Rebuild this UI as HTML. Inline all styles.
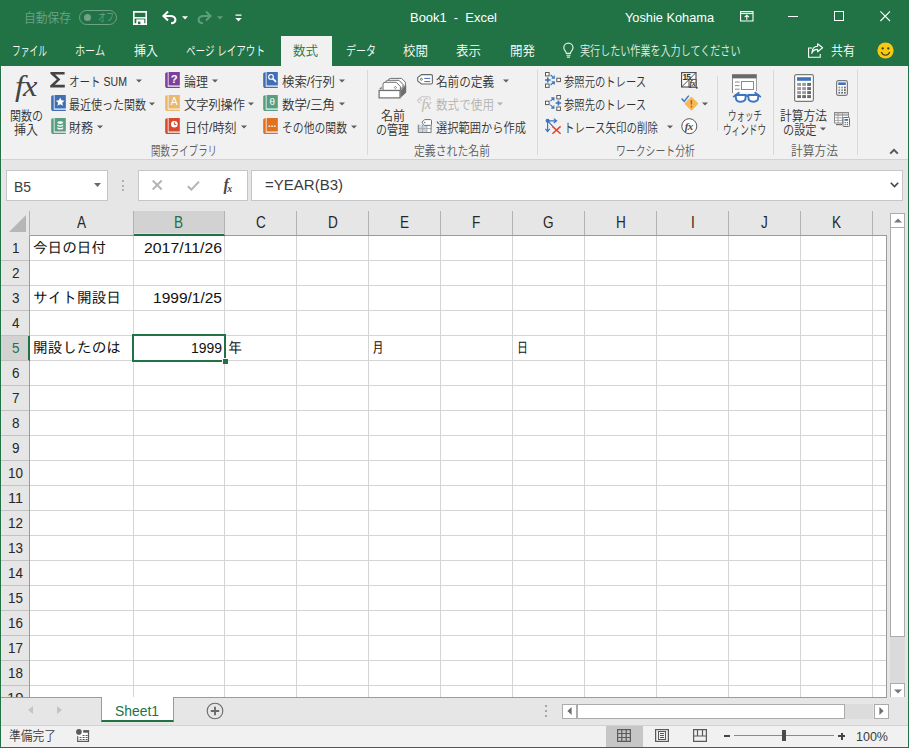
<!DOCTYPE html><html lang="ja"><head><meta charset="utf-8"><title>Book1 - Excel</title><style>
html,body{margin:0;padding:0;background:#e6e6e6;}
#w{position:relative;width:909px;height:748px;overflow:hidden;background:#e6e6e6;}
#w *{box-sizing:border-box;}
.a{position:absolute;}
.t{position:absolute;white-space:pre;transform-origin:0 50%;display:block;}
.u{font-family:"Liberation Sans","Noto Sans CJK JP",sans-serif;font-weight:350;}
.c{font-family:"Liberation Sans","IPAGothic","Noto Sans CJK JP",sans-serif;}
svg{position:absolute;overflow:visible;}

</style></head><body><div id="w">
<div class="a" style="left:0px;top:0px;width:909px;height:66px;background:#217346;"></div>
<div class="a" style="left:281px;top:36px;width:51px;height:30px;background:#f1f1f1;"></div>
<div class="a" style="left:0px;top:66px;width:909px;height:94px;background:#f1f1f1;border-bottom:1px solid #d2d2d2;"></div>
<div class="a" style="left:0px;top:66px;width:1px;height:682px;background:#217346;"></div>
<div class="a" style="left:1px;top:66px;width:1px;height:93px;background:#fbfbfb;"></div>
<div class="a" style="left:908px;top:66px;width:1px;height:682px;background:#217346;"></div>
<div class="a" style="left:0px;top:747px;width:909px;height:1px;background:#217346;"></div>
<div class="a" style="left:79px;top:10px;width:38px;height:15px;border:1px solid #6fa386;border-radius:8px;"></div>
<div class="a" style="left:84px;top:14px;width:7px;height:7px;background:#6fa386;border-radius:50%;"></div>
<svg style="left:136px;top:79px" width="6" height="4" viewBox="0 0 6 4"><path d="M0 0.5h6L3 3.5z" fill="#5e5e5e"/></svg>
<svg style="left:149px;top:102px" width="6" height="4" viewBox="0 0 6 4"><path d="M0 0.5h6L3 3.5z" fill="#5e5e5e"/></svg>
<svg style="left:97px;top:125px" width="6" height="4" viewBox="0 0 6 4"><path d="M0 0.5h6L3 3.5z" fill="#5e5e5e"/></svg>
<svg style="left:212px;top:79px" width="6" height="4" viewBox="0 0 6 4"><path d="M0 0.5h6L3 3.5z" fill="#5e5e5e"/></svg>
<svg style="left:248px;top:102px" width="6" height="4" viewBox="0 0 6 4"><path d="M0 0.5h6L3 3.5z" fill="#5e5e5e"/></svg>
<svg style="left:240.5px;top:125px" width="6" height="4" viewBox="0 0 6 4"><path d="M0 0.5h6L3 3.5z" fill="#5e5e5e"/></svg>
<svg style="left:339px;top:79px" width="6" height="4" viewBox="0 0 6 4"><path d="M0 0.5h6L3 3.5z" fill="#5e5e5e"/></svg>
<svg style="left:339px;top:102px" width="6" height="4" viewBox="0 0 6 4"><path d="M0 0.5h6L3 3.5z" fill="#5e5e5e"/></svg>
<svg style="left:351px;top:125px" width="6" height="4" viewBox="0 0 6 4"><path d="M0 0.5h6L3 3.5z" fill="#5e5e5e"/></svg>
<svg style="left:503px;top:79px" width="6" height="4" viewBox="0 0 6 4"><path d="M0 0.5h6L3 3.5z" fill="#5e5e5e"/></svg>
<svg style="left:667px;top:125px" width="6" height="4" viewBox="0 0 6 4"><path d="M0 0.5h6L3 3.5z" fill="#5e5e5e"/></svg>
<svg style="left:702px;top:102px" width="6" height="4" viewBox="0 0 6 4"><path d="M0 0.5h6L3 3.5z" fill="#5e5e5e"/></svg>
<svg style="left:820px;top:127px" width="6" height="4" viewBox="0 0 6 4"><path d="M0 0.5h6L3 3.5z" fill="#5e5e5e"/></svg>
<svg style="left:497px;top:102px" width="6" height="4" viewBox="0 0 6 4"><path d="M0 0.5h6L3 3.5z" fill="#b1b1b1"/></svg>
<div class="a" style="left:367px;top:70px;width:1px;height:85px;background:#d8d8d8;"></div>
<div class="a" style="left:537px;top:70px;width:1px;height:85px;background:#d8d8d8;"></div>
<div class="a" style="left:717px;top:76px;width:1px;height:55px;background:#d8d8d8;"></div>
<div class="a" style="left:773px;top:70px;width:1px;height:85px;background:#d8d8d8;"></div>
<div class="a" style="left:857px;top:70px;width:1px;height:85px;background:#d8d8d8;"></div>
<div class="a" style="left:6px;top:170px;width:102px;height:31px;background:#ffffff;border:1px solid #c6c6c6;"></div>
<svg style="left:94px;top:183px" width="7" height="4" viewBox="0 0 7 4"><path d="M0 0h7L3.500 4z" fill="#6a6a6a"/></svg>
<div class="a" style="left:122px;top:180px;width:2px;height:2px;background:#b0b0b0;"></div>
<div class="a" style="left:122px;top:184.5px;width:2px;height:2px;background:#b0b0b0;"></div>
<div class="a" style="left:122px;top:189px;width:2px;height:2px;background:#b0b0b0;"></div>
<div class="a" style="left:138px;top:170px;width:110px;height:31px;background:#ffffff;border:1px solid #c6c6c6;"></div>
<div class="a" style="left:251px;top:170px;width:652px;height:31px;background:#ffffff;border:1px solid #c6c6c6;"></div>
<div class="a" style="left:30px;top:236px;width:857px;height:461px;background:#ffffff;"></div>
<div class="a" style="left:134px;top:211px;width:90px;height:23px;background:#d2d2d2;"></div>
<div class="a" style="left:134px;top:233px;width:90px;height:1px;background:#e4dede;"></div>
<div class="a" style="left:1px;top:336px;width:28px;height:24px;background:#d2d2d2;"></div>
<div class="a" style="left:30px;top:235px;width:857px;height:1px;background:#9b9b9b;"></div>
<div class="a" style="left:134px;top:234px;width:91px;height:2px;background:#217346;"></div>
<div class="a" style="left:29px;top:236px;width:1px;height:461px;background:#9b9b9b;"></div>
<div class="a" style="left:28px;top:336px;width:2px;height:25px;background:#217346;"></div>
<div class="a" style="left:133px;top:211px;width:1px;height:24px;background:#b2b2b2;"></div>
<div class="a" style="left:133px;top:236px;width:1px;height:461px;background:#d4d4d4;"></div>
<div class="a" style="left:224px;top:211px;width:1px;height:24px;background:#b2b2b2;"></div>
<div class="a" style="left:224px;top:236px;width:1px;height:461px;background:#d4d4d4;"></div>
<div class="a" style="left:296px;top:211px;width:1px;height:24px;background:#b2b2b2;"></div>
<div class="a" style="left:296px;top:236px;width:1px;height:461px;background:#d4d4d4;"></div>
<div class="a" style="left:368px;top:211px;width:1px;height:24px;background:#b2b2b2;"></div>
<div class="a" style="left:368px;top:236px;width:1px;height:461px;background:#d4d4d4;"></div>
<div class="a" style="left:440px;top:211px;width:1px;height:24px;background:#b2b2b2;"></div>
<div class="a" style="left:440px;top:236px;width:1px;height:461px;background:#d4d4d4;"></div>
<div class="a" style="left:512px;top:211px;width:1px;height:24px;background:#b2b2b2;"></div>
<div class="a" style="left:512px;top:236px;width:1px;height:461px;background:#d4d4d4;"></div>
<div class="a" style="left:584px;top:211px;width:1px;height:24px;background:#b2b2b2;"></div>
<div class="a" style="left:584px;top:236px;width:1px;height:461px;background:#d4d4d4;"></div>
<div class="a" style="left:656px;top:211px;width:1px;height:24px;background:#b2b2b2;"></div>
<div class="a" style="left:656px;top:236px;width:1px;height:461px;background:#d4d4d4;"></div>
<div class="a" style="left:728px;top:211px;width:1px;height:24px;background:#b2b2b2;"></div>
<div class="a" style="left:728px;top:236px;width:1px;height:461px;background:#d4d4d4;"></div>
<div class="a" style="left:800px;top:211px;width:1px;height:24px;background:#b2b2b2;"></div>
<div class="a" style="left:800px;top:236px;width:1px;height:461px;background:#d4d4d4;"></div>
<div class="a" style="left:872px;top:211px;width:1px;height:24px;background:#b2b2b2;"></div>
<div class="a" style="left:872px;top:236px;width:1px;height:461px;background:#d4d4d4;"></div>
<div class="a" style="left:29px;top:211px;width:1px;height:25px;background:#b2b2b2;"></div>
<div class="a" style="left:30px;top:260px;width:857px;height:1px;background:#d4d4d4;"></div>
<div class="a" style="left:1px;top:260px;width:28px;height:1px;background:#c2c2c2;"></div>
<div class="a" style="left:30px;top:285px;width:857px;height:1px;background:#d4d4d4;"></div>
<div class="a" style="left:1px;top:285px;width:28px;height:1px;background:#c2c2c2;"></div>
<div class="a" style="left:30px;top:310px;width:857px;height:1px;background:#d4d4d4;"></div>
<div class="a" style="left:1px;top:310px;width:28px;height:1px;background:#c2c2c2;"></div>
<div class="a" style="left:30px;top:335px;width:857px;height:1px;background:#d4d4d4;"></div>
<div class="a" style="left:1px;top:335px;width:28px;height:1px;background:#c2c2c2;"></div>
<div class="a" style="left:30px;top:360px;width:857px;height:1px;background:#d4d4d4;"></div>
<div class="a" style="left:1px;top:360px;width:28px;height:1px;background:#c2c2c2;"></div>
<div class="a" style="left:30px;top:385px;width:857px;height:1px;background:#d4d4d4;"></div>
<div class="a" style="left:1px;top:385px;width:28px;height:1px;background:#c2c2c2;"></div>
<div class="a" style="left:30px;top:410px;width:857px;height:1px;background:#d4d4d4;"></div>
<div class="a" style="left:1px;top:410px;width:28px;height:1px;background:#c2c2c2;"></div>
<div class="a" style="left:30px;top:435px;width:857px;height:1px;background:#d4d4d4;"></div>
<div class="a" style="left:1px;top:435px;width:28px;height:1px;background:#c2c2c2;"></div>
<div class="a" style="left:30px;top:460px;width:857px;height:1px;background:#d4d4d4;"></div>
<div class="a" style="left:1px;top:460px;width:28px;height:1px;background:#c2c2c2;"></div>
<div class="a" style="left:30px;top:485px;width:857px;height:1px;background:#d4d4d4;"></div>
<div class="a" style="left:1px;top:485px;width:28px;height:1px;background:#c2c2c2;"></div>
<div class="a" style="left:30px;top:510px;width:857px;height:1px;background:#d4d4d4;"></div>
<div class="a" style="left:1px;top:510px;width:28px;height:1px;background:#c2c2c2;"></div>
<div class="a" style="left:30px;top:535px;width:857px;height:1px;background:#d4d4d4;"></div>
<div class="a" style="left:1px;top:535px;width:28px;height:1px;background:#c2c2c2;"></div>
<div class="a" style="left:30px;top:560px;width:857px;height:1px;background:#d4d4d4;"></div>
<div class="a" style="left:1px;top:560px;width:28px;height:1px;background:#c2c2c2;"></div>
<div class="a" style="left:30px;top:585px;width:857px;height:1px;background:#d4d4d4;"></div>
<div class="a" style="left:1px;top:585px;width:28px;height:1px;background:#c2c2c2;"></div>
<div class="a" style="left:30px;top:610px;width:857px;height:1px;background:#d4d4d4;"></div>
<div class="a" style="left:1px;top:610px;width:28px;height:1px;background:#c2c2c2;"></div>
<div class="a" style="left:30px;top:635px;width:857px;height:1px;background:#d4d4d4;"></div>
<div class="a" style="left:1px;top:635px;width:28px;height:1px;background:#c2c2c2;"></div>
<div class="a" style="left:30px;top:660px;width:857px;height:1px;background:#d4d4d4;"></div>
<div class="a" style="left:1px;top:660px;width:28px;height:1px;background:#c2c2c2;"></div>
<div class="a" style="left:30px;top:685px;width:857px;height:1px;background:#d4d4d4;"></div>
<div class="a" style="left:1px;top:685px;width:28px;height:1px;background:#c2c2c2;"></div>
<div class="a" style="left:1px;top:686px;width:28px;height:11px;overflow:hidden;"><span class="c" style="position:absolute;left:6px;top:1px;font-size:15px;line-height:21px;color:#262626;">19</span></div>
<div class="a" style="left:886px;top:236px;width:1px;height:461px;background:#9b9b9b;"></div>
<svg style="left:9px;top:215px" width="17" height="17" viewBox="0 0 17 17"><path d="M17 0V17H0z" fill="#b6b6b6"/></svg>
<div class="a" style="left:132px;top:334px;width:94px;height:28px;border:2px solid #217346;"></div>
<div class="a" style="left:222px;top:358px;width:6px;height:6px;background:#217346;border:1px solid #fff;border-right:0;border-bottom:0;"></div>
<div class="a" style="left:890px;top:213px;width:15px;height:15px;background:#ffffff;border:1px solid #ababab;"></div>
<div class="a" style="left:890px;top:637px;width:15px;height:46px;background:#dadada;"></div>
<div class="a" style="left:890px;top:228px;width:15px;height:409px;background:#ffffff;border:1px solid #ababab;border-top:0;"></div>
<div class="a" style="left:890px;top:683px;width:15px;height:15px;background:#ffffff;border:1px solid #ababab;"></div>
<svg style="left:893.5px;top:218px" width="8" height="5" viewBox="0 0 8 5"><path d="M0 4.6h8L4 0.4z" fill="#777"/></svg>
<svg style="left:893.5px;top:688.5px" width="8" height="5" viewBox="0 0 8 5"><path d="M0 0.4h8L4 4.6z" fill="#777"/></svg>
<div class="a" style="left:1px;top:697px;width:907px;height:28px;background:#e6e6e6;"></div>
<div class="a" style="left:1px;top:697px;width:886px;height:1px;background:#9b9b9b;"></div>
<div class="a" style="left:101px;top:697px;width:73px;height:25px;background:#ffffff;border-bottom:2px solid #217346;border-right:1px solid #9b9b9b;border-left:1px solid #9b9b9b;"></div>
<svg style="left:28px;top:706px" width="5" height="8" viewBox="0 0 5 8"><path d="M5 0v8L0 4z" fill="#c4c4c4"/></svg>
<svg style="left:57px;top:706px" width="5" height="8" viewBox="0 0 5 8"><path d="M0 0v8L5 4z" fill="#c4c4c4"/></svg>
<svg style="left:206px;top:702px" width="18" height="18" viewBox="0 0 18 18"><circle cx="9" cy="9" r="7.8" fill="none" stroke="#6a6a6a" stroke-width="1.1"/><path d="M4.8 9h8.400M9 4.800v8.400" stroke="#6a6a6a" stroke-width="1.900"/></svg>
<div class="a" style="left:545px;top:705px;width:2px;height:2px;background:#a6a6a6;"></div>
<div class="a" style="left:545px;top:710px;width:2px;height:2px;background:#a6a6a6;"></div>
<div class="a" style="left:545px;top:715px;width:2px;height:2px;background:#a6a6a6;"></div>
<div class="a" style="left:845px;top:704px;width:28px;height:15px;background:#dcdcdc;"></div>
<div class="a" style="left:562px;top:704px;width:15px;height:15px;background:#ffffff;border:1px solid #ababab;"></div>
<div class="a" style="left:577px;top:704px;width:268px;height:15px;background:#ffffff;border:1px solid #ababab;"></div>
<div class="a" style="left:874px;top:704px;width:15px;height:15px;background:#ffffff;border:1px solid #ababab;"></div>
<svg style="left:567px;top:707px" width="5" height="8" viewBox="0 0 5 8"><path d="M4.600 0v8L0.400 4z" fill="#6e6e6e"/></svg>
<svg style="left:879px;top:707px" width="5" height="8" viewBox="0 0 5 8"><path d="M0.400 0v8L4.600 4z" fill="#6e6e6e"/></svg>
<div class="a" style="left:1px;top:725px;width:907px;height:22px;background:#f1f1f1;border-top:1px solid #d2d2d2;"></div>
<div class="a" style="left:606px;top:726px;width:37px;height:21px;background:#c6c6c6;"></div>
<div class="a" style="left:724px;top:735px;width:6px;height:2px;background:#444;"></div>
<div class="a" style="left:734px;top:735px;width:100px;height:1px;background:#8a8a8a;"></div>
<div class="a" style="left:782px;top:730px;width:4px;height:11px;background:#4a4a4a;"></div>
<div class="a" style="left:838px;top:735px;width:7px;height:2px;background:#444;"></div>
<div class="a" style="left:840.5px;top:732.5px;width:2px;height:7px;background:#444;"></div>
<svg style="left:133px;top:11px" width="14" height="14" viewBox="0 0 14 14"><path d="M0.800 0.900h12.400v12.200H0.800z" fill="none" stroke="#ffffff" stroke-width="1.600"/><path d="M1 6.800h12" stroke="#ffffff" stroke-width="1.500"/><rect x="3.300" y="8.400" width="8" height="5.200" fill="#ffffff"/><rect x="5" y="10.600" width="2.400" height="2.600" fill="#217346"/></svg>
<svg style="left:162px;top:11px" width="15" height="13" viewBox="0 0 15 13"><g fill="none" stroke="#ffffff" stroke-width="2.100"><path d="M6 0.600L1.500 5l4.500 4.400"/><path d="M1.800 5h6.600c3 0 5 1.600 5 3.800 0 2.100-1.700 3.400-4.400 3.400"/></g></svg>
<svg style="left:197px;top:11px" width="15" height="13" viewBox="0 0 15 13"><g transform="translate(15,0) scale(-1,1)" fill="none" stroke="#5f9d7c" stroke-width="2.100"><path d="M6 0.600L1.500 5l4.500 4.400"/><path d="M1.800 5h6.600c3 0 5 1.600 5 3.800 0 2.100-1.700 3.400-4.400 3.400"/></g></svg>
<svg style="left:182px;top:16px" width="6" height="4" viewBox="0 0 6 4"><path d="M0 0.3h6L3 3.6z" fill="#ffffff"/></svg>
<svg style="left:217px;top:16px" width="6" height="4" viewBox="0 0 6 4"><path d="M0 0.3h6L3 3.6z" fill="#5f9d7c"/></svg>
<svg style="left:235px;top:13.8px" width="7" height="9" viewBox="0 0 7 9"><path d="M0.5 0.5h6v1.3h-6zM0.3 4h6.4L3.5 7.6z" fill="#ffffff"/></svg>
<svg style="left:740px;top:11px" width="14" height="10.5" viewBox="0 0 14 10.5"><path d="M0.600 0.600h12.400v9.400H0.600z" fill="none" stroke="#ffffff" stroke-width="1.100"/><path d="M0.600 2.600h12.400" stroke="#ffffff" stroke-width="1"/><path d="M6.800 8.800V4.400M4.600 6.200l2.200-2 2.200 2" fill="none" stroke="#ffffff" stroke-width="1.100"/></svg>
<div class="a" style="left:788px;top:16px;width:10px;height:1px;background:#ffffff;"></div>
<div class="a" style="left:834px;top:11px;width:10px;height:10px;border:1px solid #ffffff;"></div>
<svg style="left:880px;top:11px" width="11" height="11" viewBox="0 0 11 11"><path d="M0.400 0.400l9.600 9.600M10 0.400l-9.600 9.600" stroke="#ffffff" stroke-width="1.100"/></svg>
<svg style="left:563px;top:42.5px" width="11" height="15" viewBox="0 0 11 15"><path d="M3.400 10.400c0-1.800-2.600-2.800-2.600-5.600a4.600 4.600 0 0 1 9.200 0c0 2.800-2.600 3.800-2.600 5.600z" fill="none" stroke="#e4efe8" stroke-width="1.200"/><path d="M3.400 12.300h4.200M3.900 14.100h3.200" stroke="#e4efe8" stroke-width="1.100"/></svg>
<svg style="left:808px;top:42.5px" width="16" height="15" viewBox="0 0 16 15"><path d="M4.2 5H0.6v9.2h11.6V11" fill="none" stroke="#ffffff" stroke-width="1.1"/><path d="M9.6 0.8l5 4-5 4V6.4C6.6 6.4 4.8 7.6 3.8 10.4 4 6.4 6 3.4 9.6 3.2z" fill="none" stroke="#ffffff" stroke-width="1.1" stroke-linejoin="round"/></svg>
<svg style="left:876.5px;top:41.5px" width="17" height="17" viewBox="0 0 18 18"><circle cx="9" cy="9" r="8.6" fill="#f7c814"/><circle cx="6" cy="6.8" r="1.2" fill="#3a3a1a"/><circle cx="12" cy="6.8" r="1.2" fill="#3a3a1a"/><path d="M4.4 10.6c1.2 2.4 2.8 3.4 4.6 3.4s3.4-1 4.6-3.4" fill="none" stroke="#3a3a1a" stroke-width="1.2"/></svg>
<span class="a" style="left:15px;top:67.5px;font:italic 30px/36px 'Liberation Serif',serif;color:#444;letter-spacing:-1px;transform:scaleX(1.080);transform-origin:0 0;">fx</span>
<svg style="left:50px;top:71.5px" width="15.5" height="15.5" viewBox="0 0 15.5 15.5"><path d="M0.4 0h14.2v2.6H5.2l5.2 5-5.6 5.2h10V15.4H0.2v-2l6.6-5.8L0.4 1.8z" fill="#444444"/></svg>
<svg style="left:51px;top:94.8px" width="15" height="16.6" viewBox="0 0 15 17"><path d="M2.6 0.2H1.9C0.8 0.2 0 1 0 2v12.4c0 1.2 0.9 2.1 2.1 2.1H15v-1.3H2.6z" fill="#3f6fb7"/><rect x="3.5" y="0" width="11.5" height="13.8" fill="#3f6fb7"/><path d="M9.25 2.6l1.3 2.9 3.1 0.3-2.3 2.1 0.7 3.1-2.8-1.6-2.8 1.6 0.7-3.1-2.3-2.1 3.1-0.3z" fill="#fff"/></svg>
<svg style="left:51px;top:118px" width="15" height="16.6" viewBox="0 0 15 17"><path d="M2.6 0.2H1.9C0.8 0.2 0 1 0 2v12.4c0 1.2 0.9 2.1 2.1 2.1H15v-1.3H2.6z" fill="#5a9e82"/><rect x="3.5" y="0" width="11.5" height="13.8" fill="#5a9e82"/><g fill="#f2f8f5"><ellipse cx="9.300" cy="4.700" rx="3" ry="1.400"/><path d="M6.300 6.300c.6.700 1.700 1 3 1s2.400-.3 3-1v1.600c-.6.700-1.700 1-3 1s-2.400-.3-3-1z"/><path d="M6.300 9.300c.6.700 1.700 1 3 1s2.400-.3 3-1v1.600c-.6.700-1.700 1-3 1s-2.400-.3-3-1z"/></g></svg>
<svg style="left:165px;top:71.6px" width="15" height="16.6" viewBox="0 0 15 17"><path d="M2.6 0.2H1.9C0.8 0.2 0 1 0 2v12.4c0 1.2 0.9 2.1 2.1 2.1H15v-1.3H2.6z" fill="#7d3f9e"/><rect x="3.5" y="0" width="11.5" height="13.8" fill="#7d3f9e"/><text x="9.3" y="11" text-anchor="middle" font-family="Liberation Sans,sans-serif" font-size="11.5" font-weight="700" fill="#fff">?</text></svg>
<svg style="left:165px;top:94.8px" width="15" height="16.6" viewBox="0 0 15 17"><path d="M2.6 0.2H1.9C0.8 0.2 0 1 0 2v12.4c0 1.2 0.9 2.1 2.1 2.1H15v-1.3H2.6z" fill="#e9b86c"/><rect x="3.5" y="0" width="11.5" height="13.8" fill="#e9b86c"/><text x="9.3" y="10.6" text-anchor="middle" font-family="Liberation Sans,sans-serif" font-size="10.5" font-weight="400" fill="#fff">A</text></svg>
<svg style="left:165px;top:118px" width="15" height="16.6" viewBox="0 0 15 17"><path d="M2.6 0.2H1.9C0.8 0.2 0 1 0 2v12.4c0 1.2 0.9 2.1 2.1 2.1H15v-1.3H2.6z" fill="#d5492c"/><rect x="3.5" y="0" width="11.5" height="13.8" fill="#d5492c"/><circle cx="9.4" cy="6.4" r="3.4" fill="#fff"/><path d="M9.4 4.2v2.4h2" fill="none" stroke="#d5492c" stroke-width="1"/></svg>
<svg style="left:263px;top:71.6px" width="15" height="16.6" viewBox="0 0 15 17"><path d="M2.6 0.2H1.9C0.8 0.2 0 1 0 2v12.4c0 1.2 0.9 2.1 2.1 2.1H15v-1.3H2.6z" fill="#3f6fb7"/><rect x="3.5" y="0" width="11.5" height="13.8" fill="#3f6fb7"/><circle cx="8" cy="5" r="2.4" fill="none" stroke="#fff" stroke-width="1.2"/><path d="M9.8 6.8l3.4 3.4" stroke="#fff" stroke-width="1.7"/></svg>
<svg style="left:263px;top:94.8px" width="15" height="16.6" viewBox="0 0 15 17"><path d="M2.6 0.2H1.9C0.8 0.2 0 1 0 2v12.4c0 1.2 0.9 2.1 2.1 2.1H15v-1.3H2.6z" fill="#5a9e82"/><rect x="3.5" y="0" width="11.5" height="13.8" fill="#5a9e82"/><text x="9.3" y="10.6" text-anchor="middle" font-family="Liberation Sans,sans-serif" font-size="10" font-weight="400" fill="#fff">θ</text></svg>
<svg style="left:263px;top:118px" width="15" height="16.6" viewBox="0 0 15 17"><path d="M2.6 0.2H1.9C0.8 0.2 0 1 0 2v12.4c0 1.2 0.9 2.1 2.1 2.1H15v-1.3H2.6z" fill="#e0721f"/><rect x="3.5" y="0" width="11.5" height="13.8" fill="#e0721f"/><text x="9.3" y="9.6" text-anchor="middle" font-family="Liberation Sans,sans-serif" font-size="9" font-weight="700" fill="#fff">…</text></svg>
<svg style="left:378px;top:76px" width="29" height="23" viewBox="0 0 29 23"><g stroke="#6e6e6e" stroke-width="1" fill="#fff">
<path d="M10.500 12V4.300Q10.600 2.400 12.600 2.400H23.600L27.400 6.200V10z"/>
<path d="M7.700 13V6.300Q7.800 4.300 9.800 4.300H21L25 8.400V12z"/>
<path d="M5 14.400V8.200Q5 6.300 7 6.300H18.200L22.400 10.600V14.400z"/>
</g>
<path d="M17.400 10.300l1.200 1.200-1.200 1.200-1.200-1.200z" fill="none" stroke="#6e6e6e" stroke-width="0.900"/>
<path d="M1 13.200l2.600-2.600v2.600z" fill="#6e6e6e"/>
<path d="M22.400 14.400L28.200 9.200V16.600l-5.800 5.300z" fill="#6e6e6e"/>
<rect x="1.100" y="14.500" width="20.900" height="7.400" fill="#fff" stroke="#6e6e6e" stroke-width="1.200"/></svg>
<svg style="left:417px;top:74px" width="16" height="11" viewBox="0 0 16 11"><path d="M4.600 0.600h9.600c.7 0 1.200.5 1.200 1.200v7c0 .7-.5 1.200-1.200 1.200H4.600L0.700 7V3.600z" fill="#fff" stroke="#666" stroke-width="1.100"/><circle cx="4.400" cy="5.300" r="1" fill="none" stroke="#666" stroke-width="0.900"/><path d="M7.300 4.400h5.900M7.300 7.600h5.900" stroke="#3f6fb7" stroke-width="1"/></svg>
<svg style="left:417px;top:96px" width="16" height="16" viewBox="0 0 16 16"><path d="M13 4.200V2c0-.7-.5-1.200-1.200-1.200H4.400L0.900 3.600v1.800L3.400 7.400" fill="none" stroke="#c2c2c2" stroke-width="1"/><circle cx="3.700" cy="3.900" r="0.900" fill="none" stroke="#c2c2c2" stroke-width="0.800"/><text x="4.400" y="13.400" font-family="Liberation Serif,serif" font-style="italic" font-size="15" fill="#b8b8b8" letter-spacing="-0.800">fx</text></svg>
<svg style="left:417px;top:119px" width="16" height="16" viewBox="0 0 16 16"><rect x="1.300" y="5.700" width="12.800" height="7.800" fill="#fff"/>
<rect x="1.300" y="5.700" width="8.600" height="7.800" fill="#c3d8ee"/>
<path d="M5.600 5.700v7.800M9.900 5.700v7.800M1.300 9.600h12.800" stroke="#a8a8a8" stroke-width="0.900"/>
<path d="M1.300 5.700v7.800h12.800V6" fill="none" stroke="#7a7a7a" stroke-width="1"/>
<path d="M7.600 0.600h5.800c.7 0 1.100.4 1.100 1.100v3.600c0 .7-.4 1.100-1.100 1.100H7.600L5.200 4V3z" fill="#fff" stroke="#6e6e6e" stroke-width="1"/><circle cx="7.800" cy="3.500" r="0.700" fill="#6e6e6e"/></svg>
<svg style="left:545px;top:72px" width="16" height="16" viewBox="0 0 16 16"><rect x="0.5" y="0.5" width="3.6" height="3.4" fill="#fff" stroke="#5a5a5a" stroke-width="1"/><rect x="0.5" y="12" width="3.6" height="3.4" fill="#fff" stroke="#5a5a5a" stroke-width="1"/><rect x="11.8" y="6.2" width="3.6" height="3.4" fill="#fff" stroke="#5a5a5a" stroke-width="1"/><path d="M0 8h5.6M2.8 5.4v5.2" stroke="#3b74c0" stroke-width="1.7"/><path d="M5.6 3l3.4 3M9.3 3.6v2.7H6.6M5.6 13l3.4-3M9.3 12.4V9.7H6.6" fill="none" stroke="#3b74c0" stroke-width="1.1"/></svg>
<svg style="left:545px;top:95px" width="16" height="16" viewBox="0 0 16 16"><rect x="0.5" y="6.2" width="3.6" height="3.4" fill="#fff" stroke="#5a5a5a" stroke-width="1"/><rect x="11.8" y="0.5" width="3.6" height="3.4" fill="#fff" stroke="#5a5a5a" stroke-width="1"/><rect x="11.8" y="12" width="3.6" height="3.4" fill="#fff" stroke="#5a5a5a" stroke-width="1"/><path d="M10.6 8h5.6M13.4 5.4v5.2" stroke="#3b74c0" stroke-width="1.7"/><path d="M5.4 6.2l3.2-3M6.2 2.9h2.7v2.7M5.4 9.8l3.2 3M6.2 13.1h2.7v-2.7" fill="none" stroke="#3b74c0" stroke-width="1.1"/></svg>
<svg style="left:545px;top:118px" width="17" height="17" viewBox="0 0 17 17"><circle cx="2.6" cy="2.8" r="2" fill="#3b74c0"/><path d="M2.6 3v10.6M0.4 10.8l2.2 2.8 2.2-2.8M3 2.8h8.4M8.8 0.6l2.8 2.2-2.8 2.2M3 3.2l5 5.4" fill="none" stroke="#3b74c0" stroke-width="1.2"/><path d="M7.4 8.4l8.2 7.4M15.6 8.4l-8.2 7.4" stroke="#e0452a" stroke-width="1.5"/></svg>
<svg style="left:681px;top:71.5px" width="17" height="17" viewBox="0 0 17 17"><rect x="0.600" y="0.600" width="14.400" height="14.400" fill="#fff" stroke="#4a4a4a" stroke-width="1.100"/>
<path d="M15 0.600L0.600 15" stroke="#4a4a4a" stroke-width="1"/>
<text x="1.400" y="7.800" font-family="Liberation Sans,sans-serif" font-size="8.500" font-weight="700" fill="#333" letter-spacing="-0.900">15</text>
<rect x="8" y="7.400" width="7" height="7.600" fill="#fff" stroke="#4a4a4a" stroke-width="1"/>
<text x="8.600" y="13.600" font-family="Liberation Serif,serif" font-style="italic" font-size="8" font-weight="700" fill="#333" letter-spacing="-0.500">fx</text>
<rect x="15" y="15" width="1.600" height="1.600" fill="#444"/></svg>
<svg style="left:681px;top:94px" width="18" height="18" viewBox="0 0 18 18"><path d="M0.6 4.6l2.6 2.8 4.6-5.8" fill="none" stroke="#3b74c0" stroke-width="1.5"/><path d="M10.4 3.6l6 6-6 6-6-6z" fill="#f4bb55" stroke="#f4bb55" stroke-width="1.6" stroke-linejoin="round"/><path d="M10.4 6v4.4M10.4 11.8v1.6" stroke="#dc4a2f" stroke-width="1.5"/></svg>
<svg style="left:681px;top:118px" width="17" height="17" viewBox="0 0 17 17"><circle cx="8.3" cy="8.2" r="7.5" fill="#fff" stroke="#555" stroke-width="1"/><text x="3.8" y="12" font-family="Liberation Serif,serif" font-style="italic" font-size="11" font-weight="700" fill="#4a4a4a" letter-spacing="-0.700">fx</text></svg>
<svg style="left:731px;top:74px" width="31" height="30" viewBox="0 0 31 30"><rect x="1" y="0.2" width="24.8" height="4.4" fill="#6a6a6a"/>
<path d="M1.5 4.6V19M25.3 4.6V17" stroke="#8a8a8a" stroke-width="1"/><rect x="2" y="4.6" width="22.8" height="14" fill="#fff"/>
<path d="M4 8h4.6M4 11.6h4.6M4 15.2h4.6" stroke="#8a8a8a" stroke-width="1"/>
<rect x="10.5" y="7.5" width="12" height="8" fill="#fff" stroke="#8a8a8a" stroke-width="1"/>
<g fill="#fff" stroke="#3b74c0" stroke-width="1.900"><path d="M4.800 21h9.800v2.600c0 2.600-1.800 4.200-4.900 4.200s-4.900-1.600-4.900-4.200z"/><path d="M17.400 21h9.800v2.600c0 2.600-1.800 4.200-4.900 4.200s-4.900-1.600-4.900-4.200z"/></g>
<path d="M14.600 21.800h2.800M5 21.400L2.600 22.600 8.400 18.200M27 21.400l2.400 1.200-5.800-4.400" fill="none" stroke="#3b74c0" stroke-width="1.700" stroke-linejoin="round"/></svg>
<svg style="left:794px;top:74px" width="20" height="28" viewBox="0 0 20 28"><rect x="0.600" y="0.600" width="18.8" height="26.8" rx="1.800" fill="#fff" stroke="#7a7a7a" stroke-width="1.200"/><rect x="3" y="3.2" width="14" height="3.6" fill="#3f74ba"/><rect x="3.2" y="8.9" width="3.8" height="3" fill="#9a9a9a"/><rect x="8.2" y="8.9" width="3.8" height="3" fill="#9a9a9a"/><rect x="13.2" y="8.9" width="3.8" height="3" fill="#6a6a6a"/><rect x="3.2" y="13.1" width="3.8" height="3" fill="#9a9a9a"/><rect x="8.2" y="13.1" width="3.8" height="3" fill="#9a9a9a"/><rect x="13.2" y="13.1" width="3.8" height="3" fill="#6a6a6a"/><rect x="3.2" y="17.1" width="3.8" height="3" fill="#9a9a9a"/><rect x="8.2" y="17.1" width="3.8" height="3" fill="#9a9a9a"/><rect x="13.2" y="17.1" width="3.8" height="3" fill="#6a6a6a"/><rect x="3.2" y="21.1" width="3.8" height="3" fill="#6a6a6a"/><rect x="8.2" y="21.1" width="3.8" height="3" fill="#6a6a6a"/><rect x="13.2" y="21.1" width="3.8" height="3" fill="#6a6a6a"/></svg>
<svg style="left:836px;top:80px" width="12" height="16" viewBox="0 0 12 16"><rect x="0.600" y="0.600" width="10.8" height="14.8" rx="1.800" fill="#fff" stroke="#7a7a7a" stroke-width="1.200"/><rect x="2.2" y="2.4" width="7.6" height="2.6" fill="#3f74ba"/><rect x="2.4" y="6.6" width="1.8" height="1.8" fill="#9a9a9a"/><rect x="5.2" y="6.6" width="1.8" height="1.8" fill="#9a9a9a"/><rect x="8" y="6.6" width="1.8" height="1.8" fill="#6a6a6a"/><rect x="2.4" y="9.2" width="1.8" height="1.8" fill="#9a9a9a"/><rect x="5.2" y="9.2" width="1.8" height="1.8" fill="#9a9a9a"/><rect x="8" y="9.2" width="1.8" height="1.8" fill="#6a6a6a"/><rect x="2.4" y="11.8" width="1.8" height="1.8" fill="#6a6a6a"/><rect x="5.2" y="11.8" width="1.8" height="1.8" fill="#6a6a6a"/><rect x="8" y="11.8" width="1.8" height="1.8" fill="#6a6a6a"/></svg>
<svg style="left:834px;top:112px" width="16" height="15" viewBox="0 0 16 15"><rect x="0.5" y="0.5" width="14" height="10.5" fill="#fff" stroke="#8a8a8a" stroke-width="1"/><rect x="0.5" y="0.5" width="14" height="2.6" fill="#d0d0d0" stroke="#8a8a8a" stroke-width="1"/>
<path d="M4 0.5V11M8.500 0.500V11M0.500 5.800h14M0.500 8.400h14" stroke="#9a9a9a" stroke-width="0.9"/><path d="M2 12.600h6" stroke="#6e6e6e" stroke-width="1.2"/>
<rect x="9" y="5.500" width="6.500" height="9" rx="0.800" fill="#fff" stroke="#6e6e6e" stroke-width="1"/><rect x="10.400" y="7" width="3.800" height="1.800" fill="#3f74ba"/>
<path d="M10.600 10.600h1.200M12.800 10.600h1.200M10.600 12.600h1.200M12.800 12.600h1.200" stroke="#6e6e6e" stroke-width="1.100"/></svg>
<svg style="left:888.5px;top:147.5px" width="10" height="7" viewBox="0 0 10 7"><path d="M1.200 5.600l3.800-3.800 3.800 3.800" fill="none" stroke="#555" stroke-width="2"/></svg>
<svg style="left:152px;top:180px" width="10.5" height="10" viewBox="0 0 10.5 10"><path d="M0.700 0.500l9 9M9.700 0.500l-9 9" stroke="#b4b4b4" stroke-width="1.900"/></svg>
<svg style="left:187px;top:180.5px" width="13" height="10" viewBox="0 0 13 10"><path d="M0.800 5.200l3.600 3.400 7.600-8" fill="none" stroke="#b4b4b4" stroke-width="2.100"/></svg>
<span class="a" style="left:223.500px;top:175px;font:italic bold 16px/20px 'Liberation Serif',serif;color:#4a4a4a;">f<span style="font-size:10px;position:relative;left:-1.500px;top:1.500px;">x</span></span>
<svg style="left:890px;top:182px" width="9" height="6" viewBox="0 0 9 6"><path d="M0.800 0.800l3.700 3.700 3.700-3.700" fill="none" stroke="#444" stroke-width="1.600"/></svg>
<svg style="left:76px;top:729px" width="14" height="14" viewBox="0 0 14 14"><path d="M2 3h10.500v9.400H2z" fill="#fff"/><circle cx="2.900" cy="2.900" r="2.800" fill="#5a5a5a"/><path d="M1.700 7.200v5.100h10.800V1.600" fill="none" stroke="#5a5a5a" stroke-width="1.200"/><rect x="7.200" y="1.100" width="5.900" height="2.600" fill="#5a5a5a"/><path d="M6.600 6.500h2M9.600 6.500h2M3.600 8.500h2M6.600 8.500h2M9.600 8.500h2M3.600 10.500h2M6.600 10.500h2M9.600 10.500h2" stroke="#5a5a5a" stroke-width="1"/></svg>
<svg style="left:617px;top:729px" width="14" height="13" viewBox="0 0 14 13"><path d="M0.600 0.600h12.800v11.800h-12.800zM0.600 4.500h12.800M0.600 8.500h12.800M4.800 0.600v11.800M9.200 0.600v11.800" fill="none" stroke="#5a5a5a" stroke-width="1.200"/></svg>
<svg style="left:655px;top:729px" width="14" height="13" viewBox="0 0 14 13"><rect x="0.600" y="0.600" width="12.800" height="11.800" fill="none" stroke="#5a5a5a" stroke-width="1.200"/><rect x="3.500" y="2.500" width="7" height="8" fill="none" stroke="#5a5a5a" stroke-width="1"/><path d="M5 4.500h4M5 6.500h4M5 8.500h4" stroke="#5a5a5a" stroke-width="1"/></svg>
<svg style="left:693px;top:729px" width="14" height="13" viewBox="0 0 14 13"><path d="M0.600 0.600h12.800v11.800h-12.800zM4.500 0.600v6.400h5v-6.400M0.600 7h12.800" fill="none" stroke="#5a5a5a" stroke-width="1.200"/></svg>
<span class="t u" style="left:24px;top:8px;font-size:13px;line-height:19px;color:#6da386;transform:scaleX(0.9036);">自動保存</span>
<span class="t u" style="left:410px;top:8px;font-size:13px;line-height:19px;color:#ffffff;transform:scaleX(0.9950);">Book1  -  Excel</span>
<span class="t u" style="left:625px;top:8px;font-size:13px;line-height:19px;color:#ffffff;transform:scaleX(0.9824);">Yoshie Kohama</span>
<span class="t u" style="left:98px;top:10px;font-size:10px;line-height:16px;color:#6da386;transform:scaleX(0.8000);">オフ</span>
<span class="t u" style="left:12px;top:41px;font-size:13px;line-height:19px;color:#ffffff;transform:scaleX(0.6729);">ファイル</span>
<span class="t u" style="left:75px;top:41px;font-size:13px;line-height:19px;color:#ffffff;transform:scaleX(0.7767);">ホーム</span>
<span class="t u" style="left:134px;top:41px;font-size:13px;line-height:19px;color:#ffffff;transform:scaleX(0.9225);">挿入</span>
<span class="t u" style="left:186px;top:41px;font-size:13px;line-height:19px;color:#ffffff;transform:scaleX(0.7358);">ページ レイアウト</span>
<span class="t u" style="left:346px;top:41px;font-size:13px;line-height:19px;color:#ffffff;transform:scaleX(0.7689);">データ</span>
<span class="t u" style="left:403px;top:41px;font-size:13px;line-height:19px;color:#ffffff;transform:scaleX(0.9610);">校閲</span>
<span class="t u" style="left:456px;top:41px;font-size:13px;line-height:19px;color:#ffffff;transform:scaleX(0.9610);">表示</span>
<span class="t u" style="left:510px;top:41px;font-size:13px;line-height:19px;color:#ffffff;transform:scaleX(0.9610);">開発</span>
<span class="t u" style="left:293px;top:41px;font-size:13px;line-height:19px;color:#217346;transform:scaleX(0.9610);">数式</span>
<span class="t u" style="left:580px;top:41px;font-size:13px;line-height:19px;color:#e4efe8;transform:scaleX(0.7745);">実行したい作業を入力してください</span>
<span class="t u" style="left:831px;top:41px;font-size:13px;line-height:19px;color:#ffffff;transform:scaleX(0.9225);">共有</span>
<span class="t u" style="left:10px;top:105.7px;font-size:13px;line-height:19px;color:#303030;transform:scaleX(0.8458);">関数の</span>
<span class="t u" style="left:14px;top:119.8px;font-size:13px;line-height:19px;color:#303030;transform:scaleX(0.9225);">挿入</span>
<span class="t u" style="left:69px;top:72px;font-size:13px;line-height:19px;color:#303030;transform:scaleX(0.8110);">オート SUM</span>
<span class="t u" style="left:69px;top:95px;font-size:13px;line-height:19px;color:#303030;transform:scaleX(0.8460);">最近使った関数</span>
<span class="t u" style="left:69px;top:118px;font-size:13px;line-height:19px;color:#303030;transform:scaleX(0.9225);">財務</span>
<span class="t u" style="left:184px;top:72px;font-size:13px;line-height:19px;color:#303030;transform:scaleX(0.9225);">論理</span>
<span class="t u" style="left:184px;top:95px;font-size:13px;line-height:19px;color:#303030;transform:scaleX(0.9382);">文字列操作</span>
<span class="t u" style="left:184.5px;top:118px;font-size:13px;line-height:19px;color:#303030;transform:scaleX(0.9258);">日付/時刻</span>
<span class="t u" style="left:282px;top:72px;font-size:13px;line-height:19px;color:#303030;transform:scaleX(0.9528);">検索/行列</span>
<span class="t u" style="left:282px;top:95px;font-size:13px;line-height:19px;color:#303030;transform:scaleX(0.9528);">数学/三角</span>
<span class="t u" style="left:282px;top:118px;font-size:13px;line-height:19px;color:#303030;transform:scaleX(0.8332);">その他の関数</span>
<span class="t u" style="left:151px;top:141.4px;font-size:13px;line-height:19px;color:#5c5c5c;transform:scaleX(0.7252);">関数ライブラリ</span>
<span class="t u" style="left:381px;top:106px;font-size:13px;line-height:19px;color:#303030;transform:scaleX(0.9225);">名前</span>
<span class="t u" style="left:376px;top:120px;font-size:13px;line-height:19px;color:#303030;transform:scaleX(0.8458);">の管理</span>
<span class="t u" style="left:436px;top:72px;font-size:13px;line-height:19px;color:#303030;transform:scaleX(0.8921);">名前の定義</span>
<span class="t u" style="left:436px;top:95px;font-size:13px;line-height:19px;color:#b1b1b1;transform:scaleX(0.8921);">数式で使用</span>
<span class="t u" style="left:436px;top:118px;font-size:13px;line-height:19px;color:#303030;transform:scaleX(0.8653);">選択範囲から作成</span>
<span class="t u" style="left:414px;top:141.4px;font-size:13px;line-height:19px;color:#5c5c5c;transform:scaleX(0.8350);">定義された名前</span>
<span class="t u" style="left:564px;top:72px;font-size:13px;line-height:19px;color:#303030;transform:scaleX(0.7933);">参照元のトレース</span>
<span class="t u" style="left:564px;top:95px;font-size:13px;line-height:19px;color:#303030;transform:scaleX(0.7933);">参照先のトレース</span>
<span class="t u" style="left:564px;top:118px;font-size:13px;line-height:19px;color:#303030;transform:scaleX(0.8078);">トレース矢印の削除</span>
<span class="t u" style="left:616px;top:141.4px;font-size:13px;line-height:19px;color:#5c5c5c;transform:scaleX(0.7595);">ワークシート分析</span>
<span class="t u" style="left:728px;top:106px;font-size:13px;line-height:19px;color:#303030;transform:scaleX(0.6536);">ウォッチ</span>
<span class="t u" style="left:723px;top:120px;font-size:13px;line-height:19px;color:#303030;transform:scaleX(0.6614);">ウィンドウ</span>
<span class="t u" style="left:780px;top:106px;font-size:13px;line-height:19px;color:#303030;transform:scaleX(0.9036);">計算方法</span>
<span class="t u" style="left:783px;top:120px;font-size:13px;line-height:19px;color:#303030;transform:scaleX(0.8586);">の設定</span>
<span class="t u" style="left:791px;top:141.4px;font-size:13px;line-height:19px;color:#5c5c5c;transform:scaleX(0.9036);">計算方法</span>
<span class="t u" style="left:14px;top:176.05px;font-size:15.5px;line-height:21.5px;color:#3b3b3b;transform:scaleX(0.8962);">B5</span>
<span class="t c" style="left:265px;top:174.1px;font-size:15px;line-height:21px;color:#3b3b3b;transform:scaleX(1.0006);">=YEAR(B3)</span>
<span class="t c" style="left:76.96px;top:212px;font-size:16px;line-height:22px;color:#262626;transform:scaleX(0.8500);">A</span>
<span class="t c" style="left:174.46px;top:212px;font-size:16px;line-height:22px;color:#217346;transform:scaleX(0.8500);">B</span>
<span class="t c" style="left:255.59px;top:212px;font-size:16px;line-height:22px;color:#262626;transform:scaleX(0.8500);">C</span>
<span class="t c" style="left:327.59px;top:212px;font-size:16px;line-height:22px;color:#262626;transform:scaleX(0.8500);">D</span>
<span class="t c" style="left:399.96px;top:212px;font-size:16px;line-height:22px;color:#262626;transform:scaleX(0.8500);">E</span>
<span class="t c" style="left:472.34px;top:212px;font-size:16px;line-height:22px;color:#262626;transform:scaleX(0.8500);">F</span>
<span class="t c" style="left:543.21px;top:212px;font-size:16px;line-height:22px;color:#262626;transform:scaleX(0.8500);">G</span>
<span class="t c" style="left:615.59px;top:212px;font-size:16px;line-height:22px;color:#262626;transform:scaleX(0.8500);">H</span>
<span class="t c" style="left:690.61px;top:212px;font-size:16px;line-height:22px;color:#262626;transform:scaleX(0.8500);">I</span>
<span class="t c" style="left:761.1px;top:212px;font-size:16px;line-height:22px;color:#262626;transform:scaleX(0.8500);">J</span>
<span class="t c" style="left:831.96px;top:212px;font-size:16px;line-height:22px;color:#262626;transform:scaleX(0.8500);">K</span>
<span class="t c" style="left:11.75px;top:236.75px;font-size:15.5px;line-height:21.5px;color:#262626;transform:scaleX(0.8696);">1</span>
<span class="t c" style="left:11.75px;top:261.75px;font-size:15.5px;line-height:21.5px;color:#262626;transform:scaleX(0.8696);">2</span>
<span class="t c" style="left:11.75px;top:286.75px;font-size:15.5px;line-height:21.5px;color:#262626;transform:scaleX(0.8696);">3</span>
<span class="t c" style="left:11.75px;top:311.75px;font-size:15.5px;line-height:21.5px;color:#262626;transform:scaleX(0.8696);">4</span>
<span class="t c" style="left:11.75px;top:336.75px;font-size:15.5px;line-height:21.5px;color:#217346;transform:scaleX(0.8696);">5</span>
<span class="t c" style="left:11.75px;top:361.75px;font-size:15.5px;line-height:21.5px;color:#262626;transform:scaleX(0.8696);">6</span>
<span class="t c" style="left:11.75px;top:386.75px;font-size:15.5px;line-height:21.5px;color:#262626;transform:scaleX(0.8696);">7</span>
<span class="t c" style="left:11.75px;top:411.75px;font-size:15.5px;line-height:21.5px;color:#262626;transform:scaleX(0.8696);">8</span>
<span class="t c" style="left:11.75px;top:436.75px;font-size:15.5px;line-height:21.5px;color:#262626;transform:scaleX(0.8696);">9</span>
<span class="t c" style="left:8.0px;top:461.75px;font-size:15.5px;line-height:21.5px;color:#262626;transform:scaleX(0.8696);">10</span>
<span class="t c" style="left:8.0px;top:486.75px;font-size:15.5px;line-height:21.5px;color:#262626;transform:scaleX(0.9320);">11</span>
<span class="t c" style="left:8.0px;top:511.75px;font-size:15.5px;line-height:21.5px;color:#262626;transform:scaleX(0.8696);">12</span>
<span class="t c" style="left:8.0px;top:536.75px;font-size:15.5px;line-height:21.5px;color:#262626;transform:scaleX(0.8696);">13</span>
<span class="t c" style="left:8.0px;top:561.75px;font-size:15.5px;line-height:21.5px;color:#262626;transform:scaleX(0.8696);">14</span>
<span class="t c" style="left:8.0px;top:586.75px;font-size:15.5px;line-height:21.5px;color:#262626;transform:scaleX(0.8696);">15</span>
<span class="t c" style="left:8.0px;top:611.75px;font-size:15.5px;line-height:21.5px;color:#262626;transform:scaleX(0.8696);">16</span>
<span class="t c" style="left:8.0px;top:636.75px;font-size:15.5px;line-height:21.5px;color:#262626;transform:scaleX(0.8696);">17</span>
<span class="t c" style="left:8.0px;top:661.75px;font-size:15.5px;line-height:21.5px;color:#262626;transform:scaleX(0.8696);">18</span>
<span class="t c" style="left:33px;top:237px;font-size:15px;line-height:21px;color:#111111;transform:scaleX(0.9733);">今日の日付</span>
<span class="t c" style="left:144px;top:237px;font-size:15px;line-height:21px;color:#111111;transform:scaleX(1.0545);">2017/11/26</span>
<span class="t c" style="left:33px;top:287px;font-size:15px;line-height:21px;color:#111111;transform:scaleX(0.9778);">サイト開設日</span>
<span class="t c" style="left:153px;top:287px;font-size:15px;line-height:21px;color:#111111;transform:scaleX(1.0339);">1999/1/25</span>
<span class="t c" style="left:33px;top:337px;font-size:15px;line-height:21px;color:#111111;transform:scaleX(0.9778);">開設したのは</span>
<span class="t c" style="left:191px;top:337px;font-size:15px;line-height:21px;color:#111111;transform:scaleX(0.9288);">1999</span>
<span class="t c" style="left:228px;top:337px;font-size:15px;line-height:21px;color:#111111;transform:scaleX(0.9333);">年</span>
<span class="t c" style="left:372px;top:337px;font-size:15px;line-height:21px;color:#111111;transform:scaleX(0.8000);">月</span>
<span class="t c" style="left:517px;top:337px;font-size:15px;line-height:21px;color:#111111;transform:scaleX(0.7333);">日</span>
<span class="t u" style="left:115px;top:700.5px;font-size:14px;line-height:20px;color:#217346;transform:scaleX(0.9915);">Sheet1</span>
<span class="t u" style="left:9px;top:726px;font-size:13px;line-height:19px;color:#3b3b3b;transform:scaleX(0.9036);">準備完了</span>
<span class="t u" style="left:856px;top:726.5px;font-size:13px;line-height:19px;color:#3b3b3b;transform:scaleX(0.9624);">100%</span>
</div></body></html>
